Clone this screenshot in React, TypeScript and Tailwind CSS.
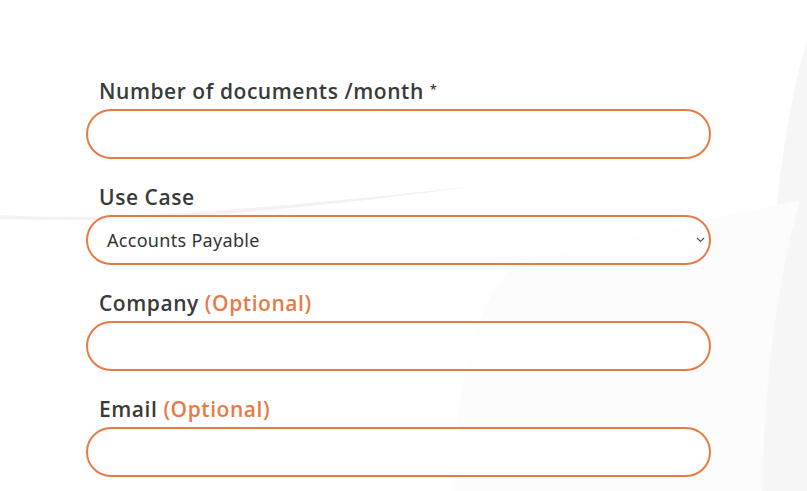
import React from "react";

function Field({ label, optional, required, children }: { label: string; optional?: boolean; required?: boolean; children?: React.ReactNode }) {
  return (
    <div className="flex flex-col">
      <label className="h-[33px] pt-[1px] pl-[13px] text-[21px] leading-[28px] font-semibold text-[#3a3a3a] tracking-[0.55px]" style={{ fontFamily: "'Open Sans', sans-serif" }}>
        {label}
        {required && <span className="text-[13px] align-top ml-[6px] relative top-[-2px]">*</span>}
        {optional && <span className="text-[#e57c48]"> (Optional)</span>}
      </label>
      {children ?? (
        <input className="h-[50px] w-full rounded-full border-2 border-[#e57c48] bg-white/80 outline-none" />
      )}
    </div>
  );
}

export default function App() {
  return (
    <div className="relative w-[807px] h-[491px] overflow-hidden bg-white">
      <svg className="absolute inset-0 pointer-events-none" width="807" height="491" viewBox="0 0 807 491">
        <path d="M0 215 C 120 223, 300 205, 476 186 C 300 210, 150 224, 0 219 Z" fill="#f2f2f2" />
        <path d="M807 40 C 775 150, 765 300, 762 491 L 807 491 Z" fill="#f6f6f6" />
        <path d="M520 260 C 470 300, 455 400, 455 491 L 762 491 C 765 400, 772 300, 800 200 Z" fill="#fcfcfc" />
      </svg>
      <div className="relative pt-[76px] pl-[86px] w-[711px] flex flex-col gap-[23px]">
        <Field label="Number of documents /month" required />
        <Field label="Use Case">
          <div className="relative h-[50px] w-full rounded-full border-2 border-[#e57c48] bg-white/80 flex items-center pl-[19px]">
            <span className="text-[18px] text-[#333] tracking-[0.3px]" style={{ fontFamily: "'Noto Sans', 'Open Sans', sans-serif" }}>Accounts Payable</span>
            <svg className="absolute right-[4px] top-[20px]" width="9" height="6" viewBox="0 0 9 6">
              <path d="M1 1 L4.5 4.5 L8 1" fill="none" stroke="#555" strokeWidth="1.2" />
            </svg>
          </div>
        </Field>
        <Field label="Company" optional />
        <Field label="Email" optional />
      </div>
    </div>
  );
}
